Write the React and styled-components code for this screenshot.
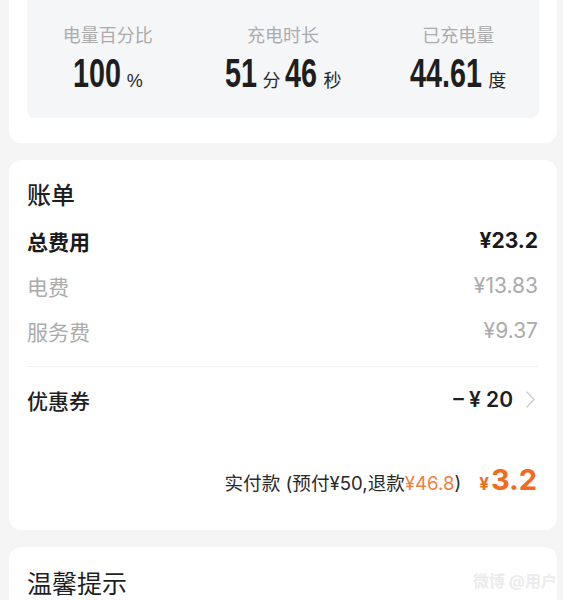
import React from 'react';
import styled, { createGlobalStyle } from 'styled-components';

const GlobalStyle = createGlobalStyle`
  html, body {
    margin: 0;
    padding: 0;
    background: #f5f5f5;
    font-family: "Inter", "Noto Sans CJK SC", sans-serif;
    color: #222;
  }
`;

const stats = [
  { label: '电量百分比', parts: [['100', '%']] },
  { label: '充电时长', parts: [['51', '分'], ['46', '秒']] },
  { label: '已充电量', parts: [['44.61', '度']] },
];

const fees = [
  { label: '总费用', value: '¥23.2', strong: true },
  { label: '电费', value: '¥13.83' },
  { label: '服务费', value: '¥9.37' },
];

// the digits are drawn narrow (DIN-like); this gives the width they take once squeezed
const NUM_SIZE = 40.5;
const SQUEEZE = 0.71;
const numWidth = (num) =>
  [...num].reduce((w, c) => w + (c === '.' ? 0.278 : 0.556), 0) * NUM_SIZE * SQUEEZE;

const App = () => {
  return (
    <Page>
      <GlobalStyle />
      <TopCard>
        <StatBox>
          {stats.map((s) => (
            <Stat key={s.label}>
              <StatLabel>{s.label}</StatLabel>
              <StatValue>
                {s.parts.map(([num, unit]) => (
                  <React.Fragment key={num}>
                    <Num $w={numWidth(num)}>
                      <span>{num}</span>
                    </Num>
                    <Unit>{unit}</Unit>
                  </React.Fragment>
                ))}
              </StatValue>
            </Stat>
          ))}
        </StatBox>
      </TopCard>

      <BillCard>
        <Title>账单</Title>
        {fees.map((f) => (
          <FeeRow key={f.label} $strong={f.strong}>
            <span>{f.label}</span>
            <Amount>{f.value}</Amount>
          </FeeRow>
        ))}
        <Divider />
        <CouponRow>
          <CouponLabel>优惠券</CouponLabel>
          <CouponValue>
            <span>– ¥ 20</span>
            <svg width="9" height="17" viewBox="0 0 9 17" fill="none">
              <path d="M1 1 L8 8.5 L1 16" stroke="#cdcdcd" strokeWidth="1.5" strokeLinecap="round" strokeLinejoin="round" />
            </svg>
          </CouponValue>
        </CouponRow>
        <PayRow>
          <PayNote>
            实付款 (预付¥50,退款<Accent>¥46.8</Accent>)
          </PayNote>
          <PayTotal>
            <small>¥</small>3.2
          </PayTotal>
        </PayRow>
      </BillCard>

      <Card>
        <TipTitle>温馨提示</TipTitle>
      </Card>
      <Watermark>微博 @用户</Watermark>
    </Page>
  );
};

const Page = styled.div`
  position: relative;
  width: 563px;
  height: 600px;
  overflow: hidden;
  padding: 0 6px 0 9px;
  box-sizing: border-box;
  display: flex;
  flex-direction: column;
  gap: 17px;
`;

const Card = styled.section`
  background: #fff;
  border-radius: 12px;
  padding: 20px 18px 26px;
  flex-shrink: 0;
`;

const TopCard = styled(Card)`
  margin-top: -30px;
  padding: 18px 18px 25px;
`;

const BillCard = styled(Card)`
  padding-bottom: 28px;
`;

const StatBox = styled.div`
  background: #f5f6f8;
  border-radius: 8px;
  padding: 34px 0 23px;
  display: grid;
  grid-template-columns: repeat(3, 1fr);
  column-gap: 14px;
`;

const Stat = styled.div`
  display: flex;
  flex-direction: column;
  align-items: center;
  gap: 5px;
`;

const StatLabel = styled.div`
  font-family: "Noto Sans CJK SC", sans-serif;
  font-size: 18px;
  line-height: 24px;
  color: #ababab;
`;

const StatValue = styled.div`
  display: flex;
  align-items: baseline;
  height: 44px;
  line-height: 44px;
`;

const Num = styled.span`
  display: inline-block;
  width: ${(p) => p.$w}px;
  white-space: nowrap;
  font-family: "Liberation Sans", sans-serif;
  font-size: ${NUM_SIZE}px;
  font-weight: 700;
  color: #1e1e1e;

  span {
    display: inline-block;
    transform: scaleX(${SQUEEZE});
    transform-origin: left center;
  }
`;

const Unit = styled.span`
  font-family: "Liberation Sans", "Noto Sans CJK SC", sans-serif;
  font-size: 18px;
  color: #262626;
  margin: 0 5px 0 6px;
  &:last-child {
    margin-right: 0;
  }
`;

const Title = styled.h2`
  margin: 0 0 6px;
  font-size: 24px;
  line-height: 32px;
  font-weight: 500;
  color: #1f1f1f;
`;

const FeeRow = styled.div`
  display: flex;
  justify-content: space-between;
  align-items: center;
  height: 45px;
  font-size: 21px;
  font-weight: ${(p) => (p.$strong ? 700 : 400)};
  color: ${(p) => (p.$strong ? '#1a1a1a' : '#ababab')};
`;

const Amount = styled.span`
  padding-right: 1px;
`;

const Divider = styled.div`
  height: 1px;
  background: #f0f0f0;
  margin-top: 13px;
`;

const CouponRow = styled.div`
  display: flex;
  justify-content: space-between;
  align-items: center;
  height: 45px;
  margin-top: 10px;
  font-size: 21px;
`;

const CouponLabel = styled.span`
  font-weight: 500;
  color: #1f1f1f;
`;

const CouponValue = styled.span`
  display: flex;
  align-items: center;
  gap: 13px;
  font-weight: 600;
  color: #1f1f1f;
  padding-right: 4px;
`;

const PayRow = styled.div`
  display: flex;
  justify-content: flex-end;
  align-items: baseline;
  gap: 18px;
  height: 40px;
  margin-top: 40px;
`;

const PayNote = styled.span`
  font-size: 18.6px;
  color: #2a2a2a;
`;

const Accent = styled.span`
  color: #ef7f3f;
`;

const PayTotal = styled.span`
  font-size: 29px;
  font-weight: 700;
  color: #f26a1b;
  padding-right: 2px;
  small {
    font-size: 17px;
    margin-right: 2px;
  }
`;

const TipTitle = styled.h3`
  margin: 0;
  font-size: 25px;
  line-height: 34px;
  font-weight: 400;
  color: #1f1f1f;
`;

const Watermark = styled.div`
  position: absolute;
  right: 6px;
  bottom: 8px;
  font-size: 16px;
  font-weight: 700;
  color: #ececec;
`;

export default App;
